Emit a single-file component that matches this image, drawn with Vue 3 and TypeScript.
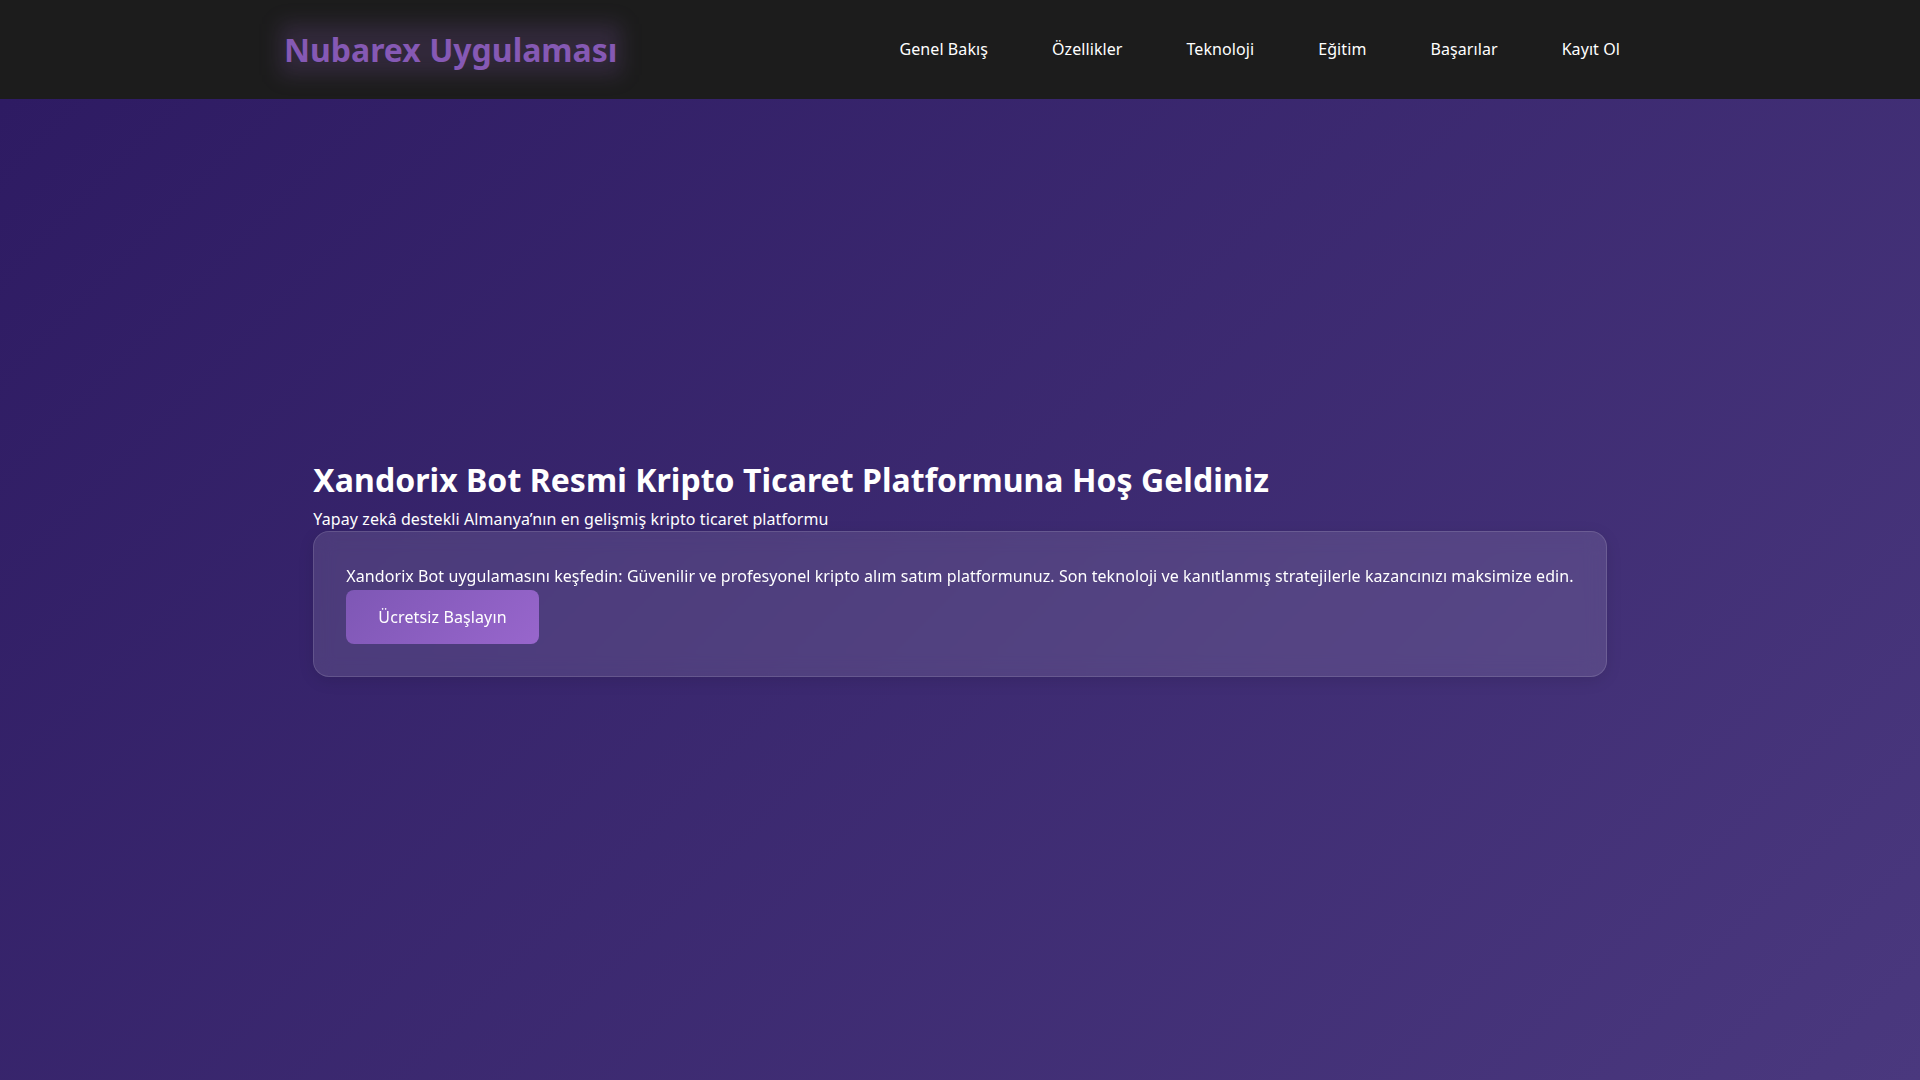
<script setup lang="ts">
const navLinks = ["Genel Bakış", "Özellikler", "Teknoloji", "Eğitim", "Başarılar", "Kayıt Ol"];
</script>

<template>
  <div class="page">
    <header class="site-header">
      <div class="logo">Nubarex Uygulaması</div>
      <nav class="nav">
        <a v-for="link in navLinks" :key="link" class="nav-link" href="#">{{ link }}</a>
      </nav>
    </header>

    <main class="hero">
      <div class="hero-inner">
        <h1 class="hero-title">Xandorix Bot Resmi Kripto Ticaret Platformuna Hoş Geldiniz</h1>
        <p class="hero-sub">Yapay zekâ destekli Almanya’nın en gelişmiş kripto ticaret platformu</p>
        <section class="card">
          <p class="card-text">
            Xandorix Bot uygulamasını keşfedin: Güvenilir ve profesyonel kripto alım satım platformunuz. Son teknoloji ve kanıtlanmış stratejilerle kazancınızı maksimize edin.
          </p>
          <a class="cta" href="#">Ücretsiz Başlayın</a>
        </section>
      </div>
    </main>
  </div>
</template>

<style scoped>
.page {
  min-height: 1080px;
  display: flex;
  flex-direction: column;
  font-family: "Noto Sans", "Open Sans", sans-serif;
  color: #fff;
  background: linear-gradient(135deg, #2d1a62 0%, #4a387e 100%);
}

.site-header {
  height: 99px;
  box-sizing: border-box;
  display: flex;
  align-items: center;
  justify-content: space-between;
  padding: 0 300px 0 284px;
  background: #1c1c1c;
}

.logo {
  position: relative;
  font-size: 32px;
  font-weight: 700;
  color: #8559b5;
}

/* soft glow behind the brand name */
.logo::before {
  content: "";
  position: absolute;
  inset: -4px;
  background: rgba(133, 89, 181, 0.2);
  filter: blur(10px);
}

.nav {
  display: flex;
  gap: 64px;
  margin-bottom: 2px;
}

.nav-link {
  font-size: 16px;
  letter-spacing: 0.08px;
  color: #fff;
  text-decoration: none;
}

.hero {
  flex: 1;
  display: flex;
  align-items: center;
  justify-content: center;
  padding-bottom: 44px;
}

.hero-inner {
  width: fit-content;
}

.hero-title {
  margin: 0 0 5.6px;
  font-size: 32px;
  font-weight: 700;
  letter-spacing: 0.04px;
}

.hero-sub {
  margin: 0;
  font-size: 16px;
  letter-spacing: 0.09px;
  line-height: 24px;
}

.card {
  padding: 32px;
  border: 1px solid rgba(255, 255, 255, 0.13);
  border-radius: 16px;
  background: rgba(255, 255, 255, 0.11);
  backdrop-filter: blur(10px);
  box-shadow: 0 4px 16px rgba(0, 0, 0, 0.1);
}

.card-text {
  margin: 0;
  font-size: 16px;
  letter-spacing: 0.071px;
  line-height: 25.6px;
  white-space: nowrap;
}

.cta {
  display: inline-block;
  padding: 16px 32px;
  border-radius: 8px;
  background: linear-gradient(135deg, #7e57b5 0%, #9866cc 100%);
  color: #fff;
  font-size: 16px;
  letter-spacing: 0.12px;
  text-decoration: none;
}
</style>
